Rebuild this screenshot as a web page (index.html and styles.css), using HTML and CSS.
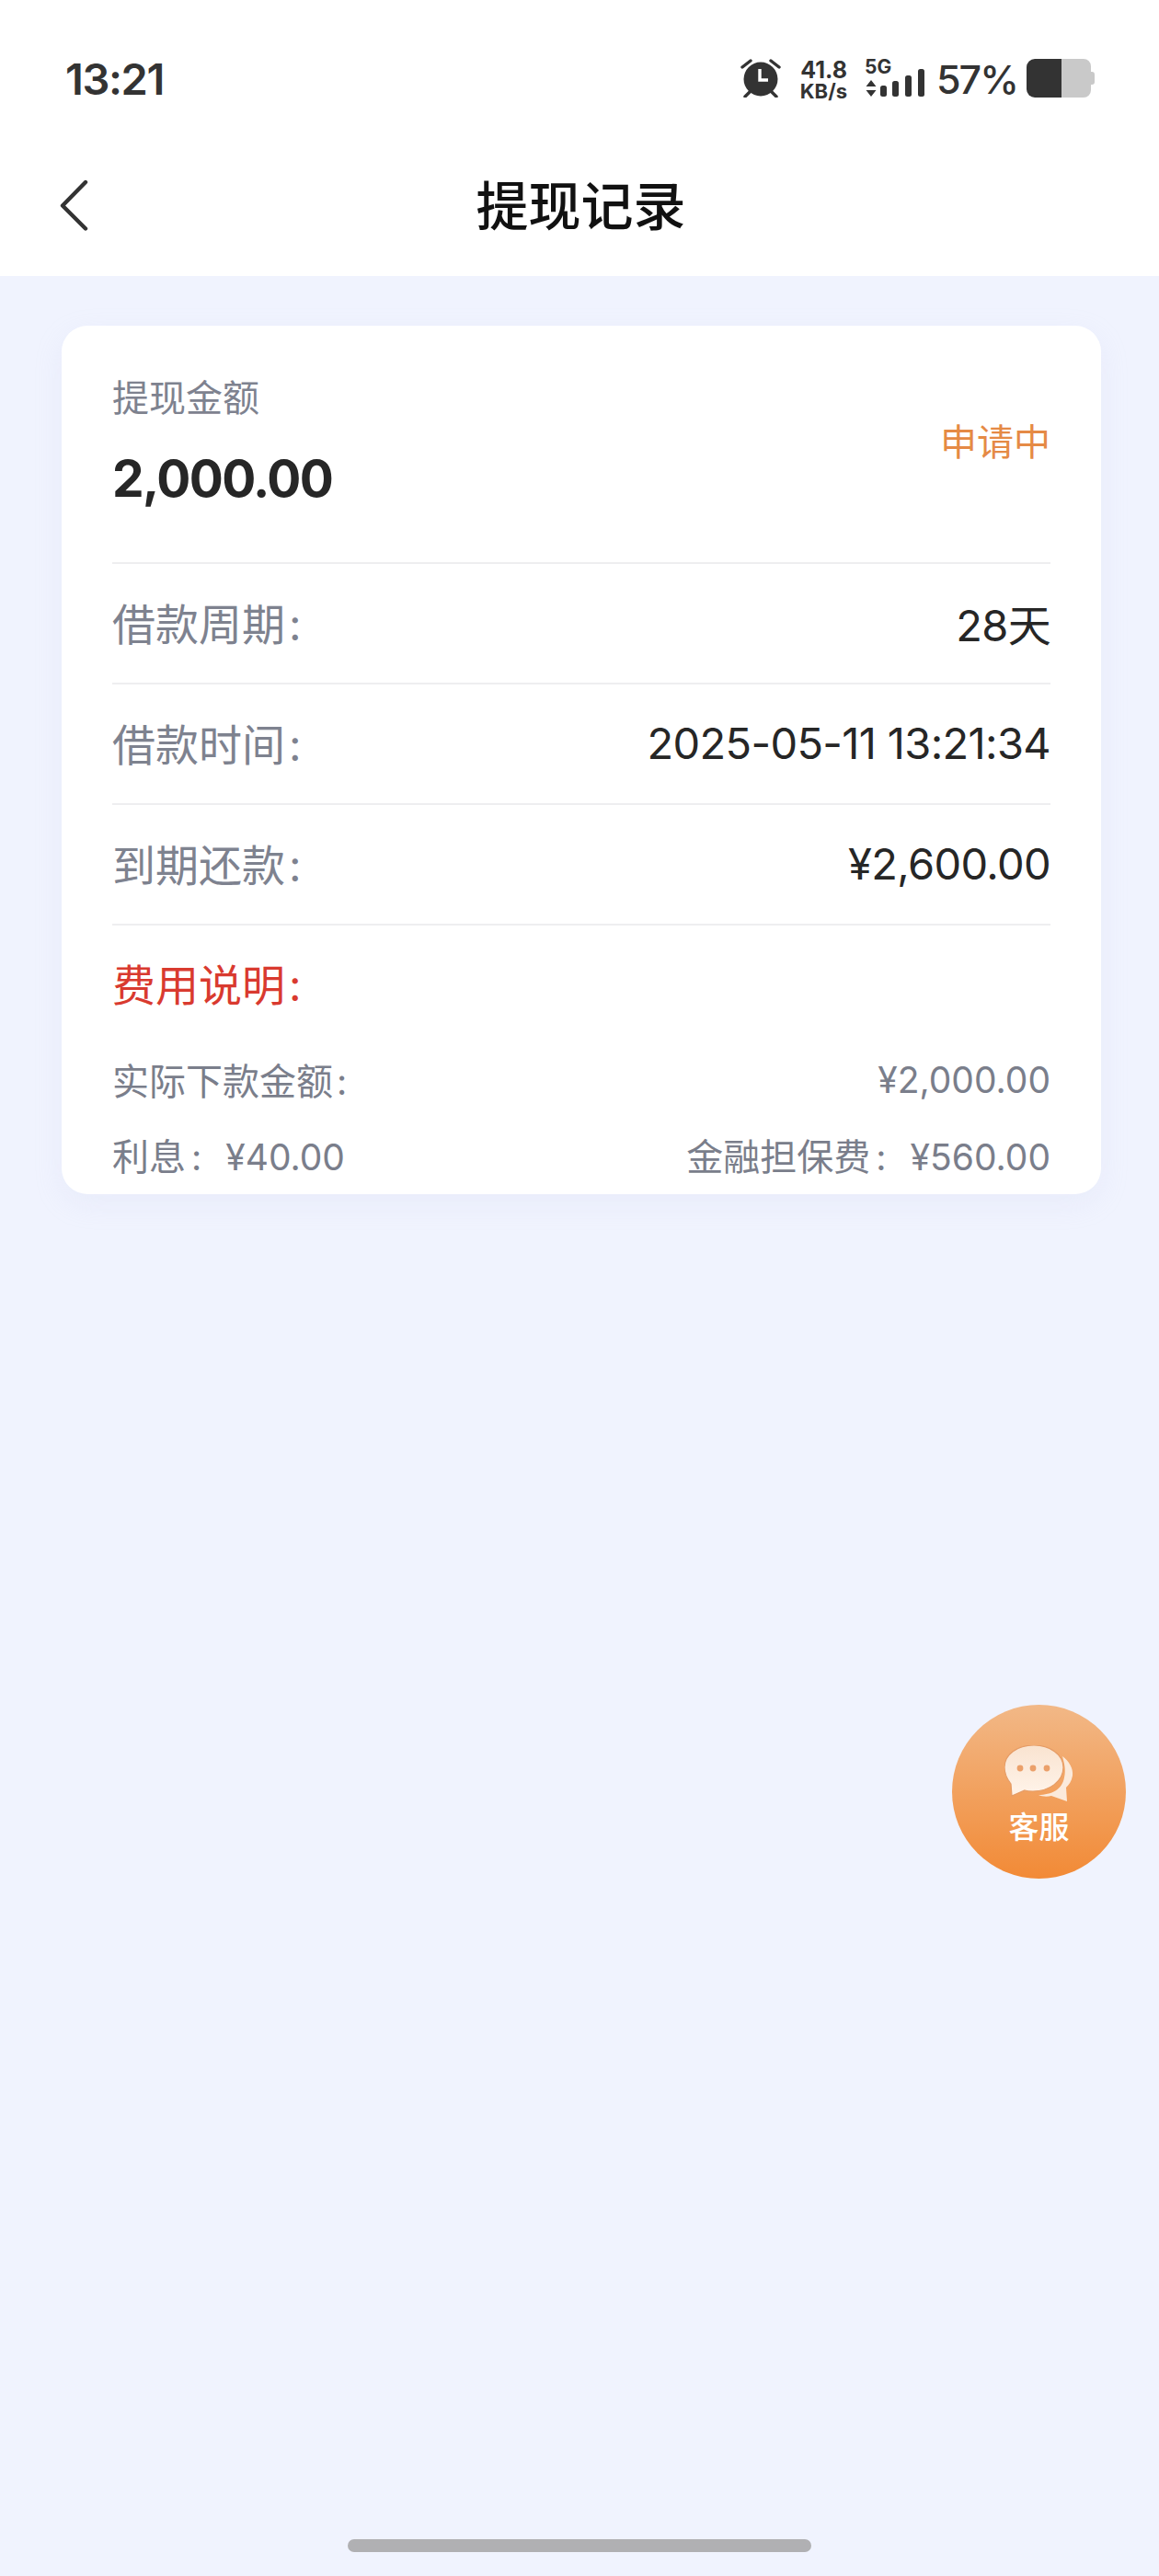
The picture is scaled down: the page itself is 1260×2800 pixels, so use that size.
FILE: index.html
```html
<!DOCTYPE html>
<html lang="zh-CN">
<head>
<meta charset="utf-8">
<title>提现记录</title>
<link rel="stylesheet" href="styles.css">
</head>
<body>
<div class="page">
  <header class="top">
    <div class="status">
      <span class="time">13:21</span>
      <div class="status-right">
        <svg class="alarm" width="44" height="42" viewBox="0 0 44 42">
          <circle cx="22" cy="22" r="18.5" fill="#333"/>
          <path d="M21 11v12h9" fill="none" stroke="#fff" stroke-width="3.4"/>
          <path d="M2 9l9-7M42 9l-9-7M5 41l5-5M39 41l-5-5" fill="none" stroke="#333" stroke-width="3.4" stroke-linecap="round"/>
        </svg>
        <div class="speed"><span class="speed-num">41.8</span><span class="speed-unit">KB/s</span></div>
        <div class="net">
          <span class="net-label">5G</span>
          <svg class="arrows" width="12" height="18" viewBox="0 0 12 18"><path d="M6 0l5.500 7H.5zM6 18l5.500-7H.5z" fill="#333"/></svg>
          <svg class="bars" width="48" height="30" viewBox="0 0 48 30">
            <rect x="0" y="18" width="7" height="12" rx="2.500" fill="#333"/>
            <rect x="13" y="13" width="7" height="17" rx="2.500" fill="#333"/>
            <rect x="27" y="7" width="7" height="23" rx="2.500" fill="#333"/>
            <rect x="41" y="0" width="7" height="30" rx="2.500" fill="#333"/>
          </svg>
        </div>
        <span class="pct">57%</span>
        <svg class="battery" width="74" height="42" viewBox="0 0 74 42">
          <path d="M38 0h24a8 8 0 0 1 8 8v6h1a3 3 0 0 1 3 3v8a3 3 0 0 1-3 3h-1v6a8 8 0 0 1-8 8H38z" fill="#c9c9c9"/>
          <path d="M9 0h29v42H9a9 9 0 0 1-9-9V9a9 9 0 0 1 9-9z" fill="#333"/>
        </svg>
      </div>
    </div>
    <div class="nav">
      <svg class="back" width="32" height="58" viewBox="0 0 32 58"><path d="M28 3L3 28.500l25 25" fill="none" stroke="#333" stroke-width="4.400" stroke-linecap="round" stroke-linejoin="round"/></svg>
      <h1 class="title">提现记录</h1>
    </div>
  </header>

  <main class="card">
    <div class="head">
      <div>
        <div class="head-label">提现金额</div>
        <div class="head-amount">2,000.00</div>
      </div>
      <div class="head-status">申请中</div>
    </div>
    <div class="row"><span class="row-key">借款周期<span class="sep">:</span></span><span class="row-val">28天</span></div>
    <div class="row"><span class="row-key">借款时间<span class="sep">:</span></span><span class="row-val">2025-05-11 13:21:34</span></div>
    <div class="row"><span class="row-key">到期还款<span class="sep">:</span></span><span class="row-val">¥2,600.00</span></div>
    <div class="fee-title">费用说明<span class="sep">:</span></div>
    <div class="fee-row fee-first"><span><span class="fee-key">实际下款金额</span><span class="sep">:</span></span><span>¥2,000.00</span></div>
    <div class="fee-row"><span><span class="fee-key">利息</span><span class="sep sep-wide">:</span>¥40.00</span><span><span class="fee-key">金融担保费</span><span class="sep sep-wide">:</span>¥560.00</span></div>
  </main>

  <div class="home-bar"></div>

  <div class="fab">
    <svg class="fab-icon" width="76" height="62" viewBox="0 0 76 62">
      <defs>
        <linearGradient id="bubble" x1="0" y1="0" x2="0" y2="1">
          <stop offset="0" stop-color="#f9e3d0"/>
          <stop offset="1" stop-color="#fff4ea"/>
        </linearGradient>
      </defs>
      <path d="M63 12c7 5 12 13 11 21-1 6-4 10-7 13l1 15-17-6c-4 1-10 1-14-1 14 0 26-6 28-19 2-8 0-16-2-23z" fill="#fbeadb"/>
      <path d="M32 0c17 0 32 10 32 24 0 15-15 26-33 26-3 0-6 0-9-1L8 55l-1-13C3 37 0 31 0 24 0 10 14 0 32 0z" fill="url(#bubble)" stroke="#e59c66" stroke-width="1.200"/>
      <circle cx="17" cy="25" r="3.400" fill="#eba06a"/>
      <circle cx="31" cy="25" r="3.400" fill="#eba06a"/>
      <circle cx="46" cy="25" r="3.400" fill="#eba06a"/>
    </svg>
    <span class="fab-label">客服</span>
  </div>
</div>
</body>
</html>
```

FILE: styles.css
```css
* { box-sizing: border-box; margin: 0; padding: 0; }
html, body { width: 1260px; height: 2800px; overflow: hidden; }
body { font-family: Inter, "Noto Sans CJK SC", sans-serif; background: #f0f3fe; }

.page { position: relative; width: 1260px; height: 2800px; display: flex; flex-direction: column; background: #f0f3fe; }

.top { height: 300px; background: #fff; flex: none; }
.status { height: 170px; padding: 62px 70px 0 71px; display: flex; justify-content: space-between; align-items: flex-start; }
.time { font-size: 47px; font-weight: 600; line-height: 48px; letter-spacing: -1.400px; color: #333; }
.status-right { display: flex; align-items: flex-start; }
.alarm { margin-top: 2px; }
.speed { margin-left: 18px; width: 54px; display: flex; flex-direction: column; align-items: flex-end; font-weight: 700; color: #333; }
.speed-num { font-size: 25px; line-height: 24px; margin-top: 2px; }
.speed-unit { font-size: 22px; line-height: 22px; }
.net { position: relative; margin-left: 19px; width: 64px; height: 44px; }
.net-label { position: absolute; left: 0; top: 0; font-size: 21px; font-weight: 700; line-height: 22px; color: #333; }
.arrows { position: absolute; left: 1px; top: 25px; }
.bars { position: absolute; left: 17px; top: 13px; }
.pct { margin-left: 14px; width: 84px; font-size: 43px; font-weight: 500; line-height: 48px; letter-spacing: -2px; white-space: nowrap; color: #333; }
.battery { margin: 2px 0 0 14px; }

.nav { position: relative; height: 130px; display: flex; align-items: flex-start; justify-content: center; }
.title { font-size: 57px; font-weight: 500; line-height: 80px; color: #111; font-family: "Noto Sans CJK SC", sans-serif; margin: 10px 0 0 3px; }
.back { position: absolute; left: 65px; top: 25px; }

.card { margin: 54px 63px 0 67px; height: 944px; padding: 0 55px; background: #fff; border-radius: 28px; box-shadow: 0 10px 30px rgba(200, 205, 235, .18); overflow: hidden; flex: none; }
.head { height: 259px; display: flex; justify-content: space-between; align-items: center; border-bottom: 2px solid #eeeef0; }
.head-label { font-size: 40px; line-height: 56px; color: #7e828f; font-family: "Noto Sans CJK SC", sans-serif; margin-top: -8px; }
.head-amount { font-size: 55px; font-weight: 700; line-height: 72px; letter-spacing: -1.600px; color: #262626; margin-top: 26px; }
.head-status { font-size: 40px; line-height: 56px; color: #e58a45; font-family: "Noto Sans CJK SC", sans-serif; margin-top: -10px; }

.row { height: 131px; display: flex; justify-content: space-between; align-items: center; border-bottom: 2px solid #eeeef0; font-size: 47px; letter-spacing: -.65px; padding-bottom: 4px; }
.row-key { color: #7e828f; letter-spacing: 0; }
.row-val { color: #262626; margin-top: 2px; }

.sep { margin-left: 4px; }
.sep-wide { margin-left: 6px; margin-right: 26px; }

.fee-title { height: 130px; line-height: 130px; font-size: 47px; color: #d93a2f; }
.fee-row { display: flex; justify-content: space-between; height: 82px; align-items: center; font-size: 39px; color: #7a7e8b; }
.fee-key { font-size: 40px; }
.fee-first { margin-top: -4px; }

.home-bar { position: absolute; left: 378px; top: 2760px; width: 504px; height: 14px; border-radius: 7px; background: #b0b0b3; }

.fab { position: absolute; left: 1035px; top: 1853px; width: 189px; height: 189px; border-radius: 50%; display: flex; flex-direction: column; align-items: center; background: linear-gradient(#f2b887, #f28a36); }
.fab-icon { margin-top: 44px; margin-left: 1px; }
.fab-label { font-size: 33px; font-weight: 500; line-height: 44px; color: #fff; font-family: "Noto Sans CJK SC", sans-serif; margin-top: 3px; }
```
